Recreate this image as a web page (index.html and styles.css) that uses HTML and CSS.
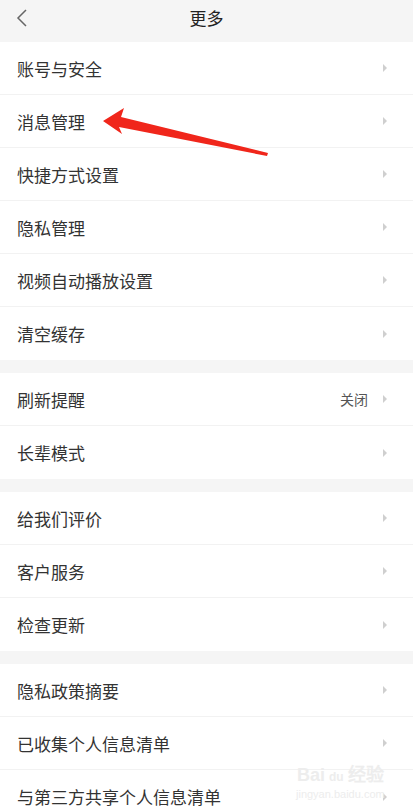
FILE: index.html
```html
<!DOCTYPE html>
<html lang="zh-CN">

<head>
    <meta charset="UTF-8">
    <meta name="viewport" content="width=device-width">
    <title>更多</title>
    <link rel="stylesheet" href="styles.css">
</head>

<body>
    <div class="header">
        <svg class="back" width="12" height="20" viewBox="0 0 12 20">
            <path d="M10 2 L2 10 L10 18" fill="none" stroke="#666" stroke-width="1.5"/>
        </svg>
        <span class="title">更多</span>
    </div>

    <div class="group">
        <div class="row"><span>账号与安全</span><i class="chev"></i></div>
        <div class="row"><span>消息管理</span><i class="chev"></i></div>
        <div class="row"><span>快捷方式设置</span><i class="chev"></i></div>
        <div class="row"><span>隐私管理</span><i class="chev"></i></div>
        <div class="row"><span>视频自动播放设置</span><i class="chev"></i></div>
        <div class="row"><span>清空缓存</span><i class="chev"></i></div>
    </div>

    <div class="group">
        <div class="row"><span>刷新提醒</span><em class="value">关闭</em><i class="chev"></i></div>
        <div class="row"><span>长辈模式</span><i class="chev"></i></div>
    </div>

    <div class="group">
        <div class="row"><span>给我们评价</span><i class="chev"></i></div>
        <div class="row"><span>客户服务</span><i class="chev"></i></div>
        <div class="row"><span>检查更新</span><i class="chev"></i></div>
    </div>

    <div class="group">
        <div class="row"><span>隐私政策摘要</span><i class="chev"></i></div>
        <div class="row"><span>已收集个人信息清单</span><i class="chev"></i></div>
        <div class="row"><span>与第三方共享个人信息清单</span><i class="chev"></i></div>
    </div>

    <!-- annotation arrow drawn over the list -->
    <svg class="pointer" width="413" height="200" viewBox="0 0 413 200">
        <polygon points="103,121 124,108 121,117 268,153 267,156 119,127 122,134" fill="#f0261b"/>
    </svg>

    <div class="watermark">
        <div class="wm-logo">Bai<b>du</b>经验</div>
        <div class="wm-url">jingyan.baidu.com</div>
    </div>
</body>

</html>
```

FILE: styles.css
```css
body {
    margin: 0;
    background-color: #f5f5f5;
    font-family: "Noto Sans CJK SC", "Liberation Sans", sans-serif;
    color: #333;
    width: 413px;
    height: 812px;
    overflow: hidden;
    position: relative;
}

.header {
    height: 42px;
    display: flex;
    align-items: center;
    justify-content: center;
    position: relative;
    background-color: #f5f5f5;
}

.back {
    position: absolute;
    left: 16px;
    top: 8px;
}

.title {
    font-size: 17px;
    color: #222;
    margin-top: -8px;
}

.group {
    background-color: #fff;
    margin-bottom: 13px;
}

.row {
    height: 53px;
    display: flex;
    align-items: center;
    padding: 0 26px 0 17px;
    border-bottom: 1px solid #f2f2f2;
    box-sizing: border-box;
    font-size: 17px;
}

.row:last-child {
    border-bottom: 0;
}

.row span {
    flex: 1;
}

.value {
    font-style: normal;
    font-size: 14px;
    color: #555;
    margin-right: 15px;
}

.chev {
    width: 0;
    height: 0;
    border-top: 4px solid transparent;
    border-bottom: 4px solid transparent;
    border-left: 4px solid #cfcfcf;
}

.pointer {
    position: absolute;
    left: 0;
    top: 0;
}

.watermark {
    position: absolute;
    left: 296px;
    top: 760px;
    color: #ededed;
    text-align: center;
    font-family: "Liberation Sans", sans-serif;
}

.wm-logo {
    font-size: 18px;
    font-weight: bold;
}

.wm-logo b {
    font-size: 12px;
    margin: 0 4px;
}

.wm-url {
    font-size: 11px;
    margin-top: 2px;
}
```
